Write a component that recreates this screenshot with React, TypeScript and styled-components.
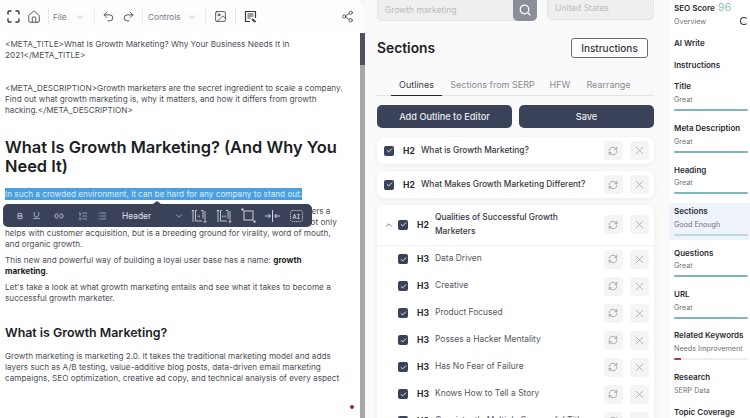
import React from "react";
import styled, { createGlobalStyle } from "styled-components";
import {
  Home, ChevronDown, ChevronUp, Undo2, Redo2, Image as ImageIcon, Share2, Check, RefreshCw, X,
  Bold, Underline, Link2, ListOrdered, List,
} from "lucide-react";

const FONT = `Inter, "Open Sans", "Liberation Sans", sans-serif`;

const Global = createGlobalStyle`
  html, body { margin: 0; padding: 0; width: 750px; height: 418px; overflow: hidden; background: #fff; }
  body { font-family: ${FONT}; color: #23262f; }
  * { box-sizing: border-box; }
`;

const Page = styled.div`
  display: grid;
  grid-template-columns: 365px 304px 81px;
  width: 750px;
  height: 418px;
  overflow: hidden;
`;

/* Editor column */
const EditorColumn = styled.section`
  display: flex;
  flex-direction: column;
  min-width: 0;
  height: 418px;
  background: #f7f7f8;
`;
const TopBar = styled.header`
  display: flex;
  align-items: center;
  height: 33px;
  flex: none;
  padding: 0 11px 0 7px;
  background: #fdfdfd;
  border-radius: 0 10px 0 0;
  color: #33373f;
`;
const BarIcon = styled.span<{ $w?: number }>`
  display: inline-flex;
  align-items: center;
  justify-content: center;
  width: ${(p) => p.$w ?? 20}px;
  flex: none;
`;
const BarDivider = styled.span<{ $ml: number; $mr: number }>`
  width: 1px;
  height: 17px;
  flex: none;
  background: #e9e9ec;
  margin: 0 ${(p) => p.$mr}px 0 ${(p) => p.$ml}px;
`;
const MenuLabel = styled.span<{ $w: number }>`
  display: inline-flex;
  align-items: center;
  justify-content: space-between;
  width: ${(p) => p.$w}px;
  flex: none;
  font-size: 8.2px;
  color: #777b84;
`;
const BarSpacer = styled.span`
  flex: 1;
`;
const EditorBody = styled.div`
  position: relative;
  flex: 1;
  display: flex;
  min-height: 0;
  background: #fff;
`;
const Doc = styled.article`
  flex: 1;
  min-width: 0;
  padding: 5.5px 9px 0 5px;
  overflow: hidden;
`;
const Para = styled.p<{ $gap?: number }>`
  margin: 0 0 ${(p) => p.$gap ?? 5}px;
  font-size: 8.2px;
  line-height: 11px;
  color: #4c4f57;
`;
const Title = styled.h1`
  margin: 0 0 11px;
  font-size: 16.4px;
  line-height: 19.5px;
  font-weight: 600;
  color: #1c1e24;
`;
const Sub = styled.h2`
  margin: 20.5px 0 10px;
  font-size: 12.4px;
  line-height: 17px;
  font-weight: 600;
  color: #1c1e24;
`;
const Selected = styled.span`
  background: #4a9fe3;
  color: #dcecf8;
  line-height: 12px;
  padding: 1px 0;
`;
const Strong = styled.b`
  color: #1c1e24;
  font-weight: 700;
`;
const Track = styled.div`
  width: 5px;
  flex: none;
  background: #a8a8aa;
`;
const Thumb = styled.div`
  height: 32px;
  background: #4b5160;
`;
const RedDot = styled.span`
  position: absolute;
  right: 11px;
  bottom: 9px;
  width: 4px;
  height: 4px;
  border-radius: 50%;
  background: #a81c3c;
`;
const Floating = styled.div`
  position: absolute;
  left: 3px;
  top: 171px;
  width: 309px;
  height: 23px;
  display: flex;
  align-items: center;
  padding-left: 8px;
  border-radius: 5px;
  background: #3a4259;
  color: #e9ebf0;
  &::before {
    content: "";
    position: absolute;
    top: -3px;
    left: 150px;
    border-left: 4px solid transparent;
    border-right: 4px solid transparent;
    border-bottom: 3px solid #3a4259;
  }
`;
const FloatLabel = styled.span`
  width: 50px;
  flex: none;
  font-size: 8.4px;
  color: #e0e3ea;
`;

/* Sections column */
const SectionsColumn = styled.section`
  display: flex;
  flex-direction: column;
  padding: 0 15px 0 12px;
  background: #fafafa;
  overflow: hidden;
  height: 418px;
`;
const SearchRow = styled.div`
  display: flex;
  gap: 10px;
  height: 21px;
  flex: none;
`;
const SearchBox = styled.div`
  width: 160px;
  display: flex;
  align-items: center;
  justify-content: space-between;
  padding-left: 7px;
  background: #efefef;
  border: 1px solid #e4e4e6;
  border-top: none;
  border-radius: 0 0 5px 5px;
  font-size: 8.5px;
  color: #b9bbc0;
`;
const SearchButton = styled.span`
  display: flex;
  align-items: center;
  justify-content: center;
  width: 24px;
  height: 21px;
  margin-right: -1px;
  background: #8a8e99;
  border-radius: 0 0 5px 5px;
  color: #fff;
`;
const Country = styled.div`
  width: 107px;
  height: 20px;
  padding: 3px 0 0 7px;
  line-height: 11px;
  background: #efefef;
  border: 1px solid #e4e4e6;
  border-top: none;
  border-radius: 0 0 5px 5px;
  font-size: 8.5px;
  color: #bcbec3;
`;
const HeadRow = styled.div`
  display: flex;
  align-items: center;
  justify-content: space-between;
  margin-top: 17px;
  padding-right: 6px;
  height: 20px;
  flex: none;
`;
const SectionTitle = styled.h2`
  margin: 0;
  font-size: 13.8px;
  font-weight: 600;
  color: #1c1e24;
`;
const Outline = styled.button`
  width: 77px;
  height: 20px;
  padding: 0;
  font: 500 10px ${FONT};
  color: #33363e;
  background: #fff;
  border: 1px solid #6b6e76;
  border-radius: 3px;
`;
const Tabs = styled.nav`
  display: flex;
  height: 38px;
  flex: none;
  align-items: flex-end;
  padding-left: 14px;
  border-bottom: 1px solid #e3e4e7;
`;
const Tab = styled.span<{ $active?: boolean; $w: number }>`
  width: ${(p) => p.$w}px;
  flex: none;
  height: 19px;
  margin-bottom: -1px;
  padding-top: 2px;
  text-align: center;
  font-size: 9px;
  line-height: 11px;
  white-space: nowrap;
  color: ${(p) => (p.$active ? "#3a3d45" : "#878a92")};
  border-bottom: 1.5px solid ${(p) => (p.$active ? "#23262f" : "transparent")};
`;
const ActionRow = styled.div`
  display: grid;
  grid-template-columns: 1fr 1fr;
  gap: 7px;
  margin-top: 9px;
  flex: none;
`;
const Primary = styled.button`
  height: 23px;
  padding: 0;
  border: none;
  border-radius: 5px;
  background: #3a4259;
  color: #e9ebf0;
  font: 500 9.2px ${FONT};
`;
const Card = styled.div<{ $first?: boolean }>`
  margin-top: ${(p) => (p.$first ? 9 : 7)}px;
  background: #fff;
  border-radius: 7px;
  box-shadow: 0 1px 5px rgba(30, 34, 50, 0.08);
  flex: none;
`;
const Row = styled.div<{ $tall?: boolean; $divided?: boolean }>`
  display: flex;
  align-items: center;
  height: ${(p) => (p.$tall ? 40.5 : 27)}px;
  padding: 0 5px 0 7px;
  border-bottom: ${(p) => (p.$divided ? "1px solid #f0f0f2" : "none")};
`;
const Toggle = styled.span`
  width: 14px;
  flex: none;
  display: flex;
  color: #33363e;
`;
const Indent = styled.span`
  width: 14px;
  flex: none;
`;
const Box = styled.span`
  display: flex;
  align-items: center;
  justify-content: center;
  width: 10px;
  height: 10px;
  flex: none;
  background: #3a4259;
  border-radius: 2px;
  color: #fff;
`;
const Tag = styled.span`
  width: 18px;
  margin-left: 9px;
  flex: none;
  font-size: 8.6px;
  font-weight: 700;
  color: #2a2d35;
`;
const RowText = styled.span<{ $h3?: boolean }>`
  flex: 1;
  min-width: 0;
  font-size: ${(p) => (p.$h3 ? 8.45 : 8.35)}px;
  font-weight: ${(p) => (p.$h3 ? 400 : 500)};
  line-height: 13.5px;
  color: ${(p) => (p.$h3 ? "#55585f" : "#34373f")};
  white-space: nowrap;
`;
const RoundBtn = styled.span`
  display: flex;
  align-items: center;
  justify-content: center;
  width: 19px;
  height: 19px;
  flex: none;
  margin-left: 7.5px;
  background: #f4f4f5;
  border-radius: 4px;
  color: #7d8087;
`;

/* Score column */
const ScoreColumn = styled.aside`
  background: #fff;
  overflow: hidden;
  height: 418px;
`;
const ScoreItem = styled.div<{ $active?: boolean; $h: number }>`
  position: relative;
  height: ${(p) => p.$h}px;
  padding: 0 2px 0 5px;
  background: ${(p) => (p.$active ? "#eff3fa" : "transparent")};
`;
const ScoreName = styled.div<{ $mt?: number }>`
  padding-top: ${(p) => p.$mt ?? 0}px;
  font-size: 8px;
  line-height: 10px;
  font-weight: 600;
  color: #2a2d35;
  white-space: nowrap;
`;
const ScoreValue = styled.span`
  margin-left: 3px;
  font-size: 11px;
  font-weight: 400;
  color: #8fc9c4;
`;
const ScoreNote = styled.div`
  margin-top: 4.5px;
  font-size: 7.2px;
  line-height: 8px;
  color: #6f7279;
  white-space: nowrap;
`;
const Meter = styled.div<{ $tone: string }>`
  height: 2px;
  margin-top: 5px;
  border-radius: 1px;
  background: #eceef0;
  overflow: hidden;
  & > i { display: block; height: 100%; background: ${(p) => p.$tone}; }
`;
const Spinner = styled.span`
  position: absolute;
  right: 2px;
  top: 17px;
  width: 8px;
  height: 8px;
  border: 1.5px solid #33363e;
  border-radius: 50%;
  border-right-color: transparent;
`;

const FullIcon = () => (
  <svg width="13" height="13" viewBox="0 0 13 13" fill="none" stroke="#33373f" strokeWidth="1.4" strokeLinecap="round">
    <path d="M1 4V2.2C1 1.5 1.5 1 2.2 1H4M9 1h1.8c.7 0 1.2.5 1.2 1.2V4M12 9v1.8c0 .7-.5 1.2-1.2 1.2H9M4 12H2.2C1.5 12 1 11.5 1 10.8V9" />
  </svg>
);
const SeoDoc = () => (
  <svg width="13" height="13" viewBox="0 0 13 13" fill="none" stroke="#33373f" strokeWidth="1.2">
    <path d="M6 11.5H1.5V1.5h10V8" />
    <path d="M3.5 4h6M3.5 6h6M3.5 8h3" />
    <path d="M8 9l3.5 3" strokeWidth="1.7" />
  </svg>
);
const LineSpace = ({ flip }: { flip?: boolean }) => (
  <svg width="16" height="16" viewBox="0 0 16 16" fill="none" stroke="#e0e3ea" strokeWidth="0.8">
    <path d="M2 14V2M.8 3.3L2 2l1.2 1.3M14 3v11.5M12.8 13.2L14 14.5l1.2-1.3" />
    <path d="M6 2.5H4.5v10.5H11M10 2.5h2v8" />
    <path d={flip ? "M6 8h4M6 8.8h4" : "M6.5 8h3M6.5 8.8h3"} strokeWidth="0.6" strokeDasharray="1 0.5" />
  </svg>
);
const FrameIcon = () => (
  <svg width="15" height="15" viewBox="0 0 15 15" fill="none" stroke="#e0e3ea" strokeWidth="0.9">
    <rect x="3" y="3" width="9" height="9" />
    <rect x="0.5" y="0.5" width="2" height="2" fill="#e0e3ea" stroke="none" />
    <rect x="12.5" y="12.5" width="2" height="2" fill="#e0e3ea" stroke="none" />
  </svg>
);
const SplitIcon = () => (
  <svg width="17" height="12" viewBox="0 0 17 12" fill="none" stroke="#e0e3ea" strokeWidth="0.9">
    <path d="M8.5 0v12M1 6h5M4.5 4L6.5 6 4.5 8M16 6h-5M12.5 4L10.5 6 12.5 8" />
  </svg>
);
const AiIcon = () => (
  <svg width="15" height="14" viewBox="0 0 15 14" fill="none" stroke="#e0e3ea" strokeWidth="0.8">
    <rect x="1.5" y="1.5" width="12" height="11" rx="2" strokeDasharray="1.2 0.8" />
    <text x="7.5" y="9.5" textAnchor="middle" fontSize="6.5" fontFamily="Liberation Mono, monospace" fill="#e0e3ea" stroke="none">AI</text>
  </svg>
);
const SearchGlyph = () => (
  <svg width="12" height="12" viewBox="0 0 12 12" fill="none" stroke="#fff" strokeWidth="1.2" strokeLinecap="round">
    <circle cx="5.5" cy="5.5" r="4.3" />
    <path d="M8.7 8.7L11 11" />
  </svg>
);

const Actions = () => (
  <>
    <RoundBtn><RefreshCw size={10} strokeWidth={1.5} /></RoundBtn>
    <RoundBtn><X size={13} strokeWidth={1} /></RoundBtn>
  </>
);
const Tick = () => (
  <Box><Check size={7} strokeWidth={3} /></Box>
);

const h3Items = [
  "Data Driven",
  "Creative",
  "Product Focused",
  "Posses a Hacker Mentality",
  "Has No Fear of Failure",
  "Knows How to Tell a Story",
  "Consistently Multiply Successful Titles",
];

type Score = { name: string; note?: string; h: number; pct?: number; tone?: string; active?: boolean; mt: number };
const scores: Score[] = [
  { name: "AI Write", h: 22, mt: 6 },
  { name: "Instructions", h: 21, mt: 6 },
  { name: "Title", note: "Great", h: 42, pct: 100, tone: "#7fb9b5", mt: 6 },
  { name: "Meta Description", note: "Great", h: 41, pct: 100, tone: "#7fb9b5", mt: 6 },
  { name: "Heading", note: "Great", h: 45, pct: 100, tone: "#7fb9b5", mt: 6.5 },
  { name: "Sections", note: "Good Enough", h: 37, pct: 100, tone: "#bcdcd8", active: true, mt: 3 },
  { name: "Questions", note: "Great", h: 42, pct: 100, tone: "#7fb9b5", mt: 7.5 },
  { name: "URL", note: "Great", h: 41, pct: 100, tone: "#7fb9b5", mt: 7 },
  { name: "Related Keywords", note: "Needs Improvement", h: 42, pct: 9, tone: "#b5345a", mt: 7 },
  { name: "Research", note: "SERP Data", h: 35, mt: 7 },
  { name: "Topic Coverage", h: 18, mt: 7 },
];

export default function App() {
  return (
    <>
      <Global />
      <Page>
        <EditorColumn>
          <TopBar>
            <BarIcon $w={13}><FullIcon /></BarIcon>
            <BarIcon $w={28}><Home size={14} strokeWidth={1.4} /></BarIcon>
            <BarDivider $ml={0} $mr={4} />
            <MenuLabel $w={32}>File<ChevronDown size={10} strokeWidth={1.2} /></MenuLabel>
            <BarDivider $ml={9} $mr={3} />
            <BarIcon $w={20}><Undo2 size={13} strokeWidth={1.5} /></BarIcon>
            <BarIcon $w={20}><Redo2 size={13} strokeWidth={1.5} /></BarIcon>
            <BarDivider $ml={4} $mr={5} />
            <MenuLabel $w={49}>Controls<ChevronDown size={10} strokeWidth={1.2} /></MenuLabel>
            <BarDivider $ml={8} $mr={7} />
            <BarIcon $w={14}><ImageIcon size={13} strokeWidth={1.5} /></BarIcon>
            <BarDivider $ml={8} $mr={7} />
            <BarIcon $w={14}><SeoDoc /></BarIcon>
            <BarSpacer />
            <Share2 size={13} strokeWidth={1.4} />
          </TopBar>
          <EditorBody>
            <Doc>
              <Para $gap={22}>&lt;META_TITLE&gt;What Is Growth Marketing? Why Your Business Needs It In 2021&lt;/META_TITLE&gt;</Para>
              <Para $gap={22}>&lt;META_DESCRIPTION&gt;Growth marketers are the secret ingredient to scale a company. Find out what growth marketing is, why it matters, and how it differs from growth hacking.&lt;/META_DESCRIPTION&gt;</Para>
              <Title>What Is Growth Marketing? (And Why You Need It)</Title>
              <Para $gap={6}><Selected>In such a crowded environment, it can be hard for any company to stand out.</Selected></Para>
              <Para $gap={5}>In a world where every brand is fighting for attention, there is a strategy that offers a<br />smart approach to reaching, engaging and retaining customers. This strategy not only<br />helps with customer acquisition, but is a breeding ground for virality, word of mouth,<br />and organic growth.</Para>
              <Para>This new and powerful way of building a loyal user base has a name: <Strong>growth</Strong><br /><Strong>marketing</Strong>.</Para>
              <Para>Let's take a look at what growth marketing entails and see what it takes to become a successful growth marketer.</Para>
              <Sub>What is Growth Marketing?</Sub>
              <Para>Growth marketing is marketing 2.0. It takes the traditional marketing model and adds layers such as A/B testing, value-additive blog posts, data-driven email marketing campaigns, SEO optimization, creative ad copy, and technical analysis of every aspect</Para>
            </Doc>
            <Track><Thumb /></Track>
            <Floating>
              <BarIcon $w={17}><Bold size={8} strokeWidth={2.2} /></BarIcon>
              <BarIcon $w={17}><Underline size={9} strokeWidth={1.6} /></BarIcon>
              <BarIcon $w={28}><Link2 size={10} strokeWidth={1.6} /></BarIcon>
              <BarIcon $w={20}><ListOrdered size={10} strokeWidth={1.3} /></BarIcon>
              <BarIcon $w={17}><List size={10} strokeWidth={1.3} /></BarIcon>
              <BarIcon $w={12} />
              <FloatLabel>Header</FloatLabel>
              <BarIcon $w={14}><ChevronDown size={10} strokeWidth={1.4} /></BarIcon>
              <BarIcon $w={25}><LineSpace /></BarIcon>
              <BarIcon $w={25}><LineSpace flip /></BarIcon>
              <BarIcon $w={24}><FrameIcon /></BarIcon>
              <BarIcon $w={24}><SplitIcon /></BarIcon>
              <BarIcon $w={25}><AiIcon /></BarIcon>
            </Floating>
            <RedDot />
          </EditorBody>
        </EditorColumn>

        <SectionsColumn>
          <SearchRow>
            <SearchBox>Growth marketing<SearchButton><SearchGlyph /></SearchButton></SearchBox>
            <Country>United States</Country>
          </SearchRow>
          <HeadRow>
            <SectionTitle>Sections</SectionTitle>
            <Outline>Instructions</Outline>
          </HeadRow>
          <Tabs>
            <Tab $active $w={51}>Outlines</Tab>
            <Tab $w={101}>Sections from SERP</Tab>
            <Tab $w={34}>HFW</Tab>
            <Tab $w={63}>Rearrange</Tab>
          </Tabs>
          <ActionRow>
            <Primary>Add Outline to Editor</Primary>
            <Primary>Save</Primary>
          </ActionRow>
          <Card $first>
            <Row><Tick /><Tag>H2</Tag><RowText>What is Growth Marketing?</RowText><Actions /></Row>
          </Card>
          <Card>
            <Row><Tick /><Tag>H2</Tag><RowText>What Makes Growth Marketing Different?</RowText><Actions /></Row>
          </Card>
          <Card>
            <Row $tall $divided>
              <Toggle><ChevronUp size={10} strokeWidth={1.6} /></Toggle>
              <Tick /><Tag>H2</Tag>
              <RowText>Qualities of Successful Growth<br />Marketers</RowText>
              <Actions />
            </Row>
            {h3Items.map((t) => (
              <Row key={t}>
                <Indent /><Tick /><Tag>H3</Tag><RowText $h3>{t}</RowText><Actions />
              </Row>
            ))}
          </Card>
        </SectionsColumn>

        <ScoreColumn>
          <ScoreItem $h={32}>
            <ScoreName $mt={2}>SEO Score<ScoreValue>96</ScoreValue></ScoreName>
            <ScoreNote>Overview</ScoreNote>
            <Spinner />
          </ScoreItem>
          {scores.map((s) => (
            <ScoreItem key={s.name} $h={s.h} $active={s.active}>
              <ScoreName $mt={s.mt}>{s.name}</ScoreName>
              {s.note && <ScoreNote>{s.note}</ScoreNote>}
              {s.pct !== undefined && (
                <Meter $tone={s.tone ?? "#7fb9b5"}><i style={{ width: `${s.pct}%` }} /></Meter>
              )}
            </ScoreItem>
          ))}
        </ScoreColumn>
      </Page>
    </>
  );
}
